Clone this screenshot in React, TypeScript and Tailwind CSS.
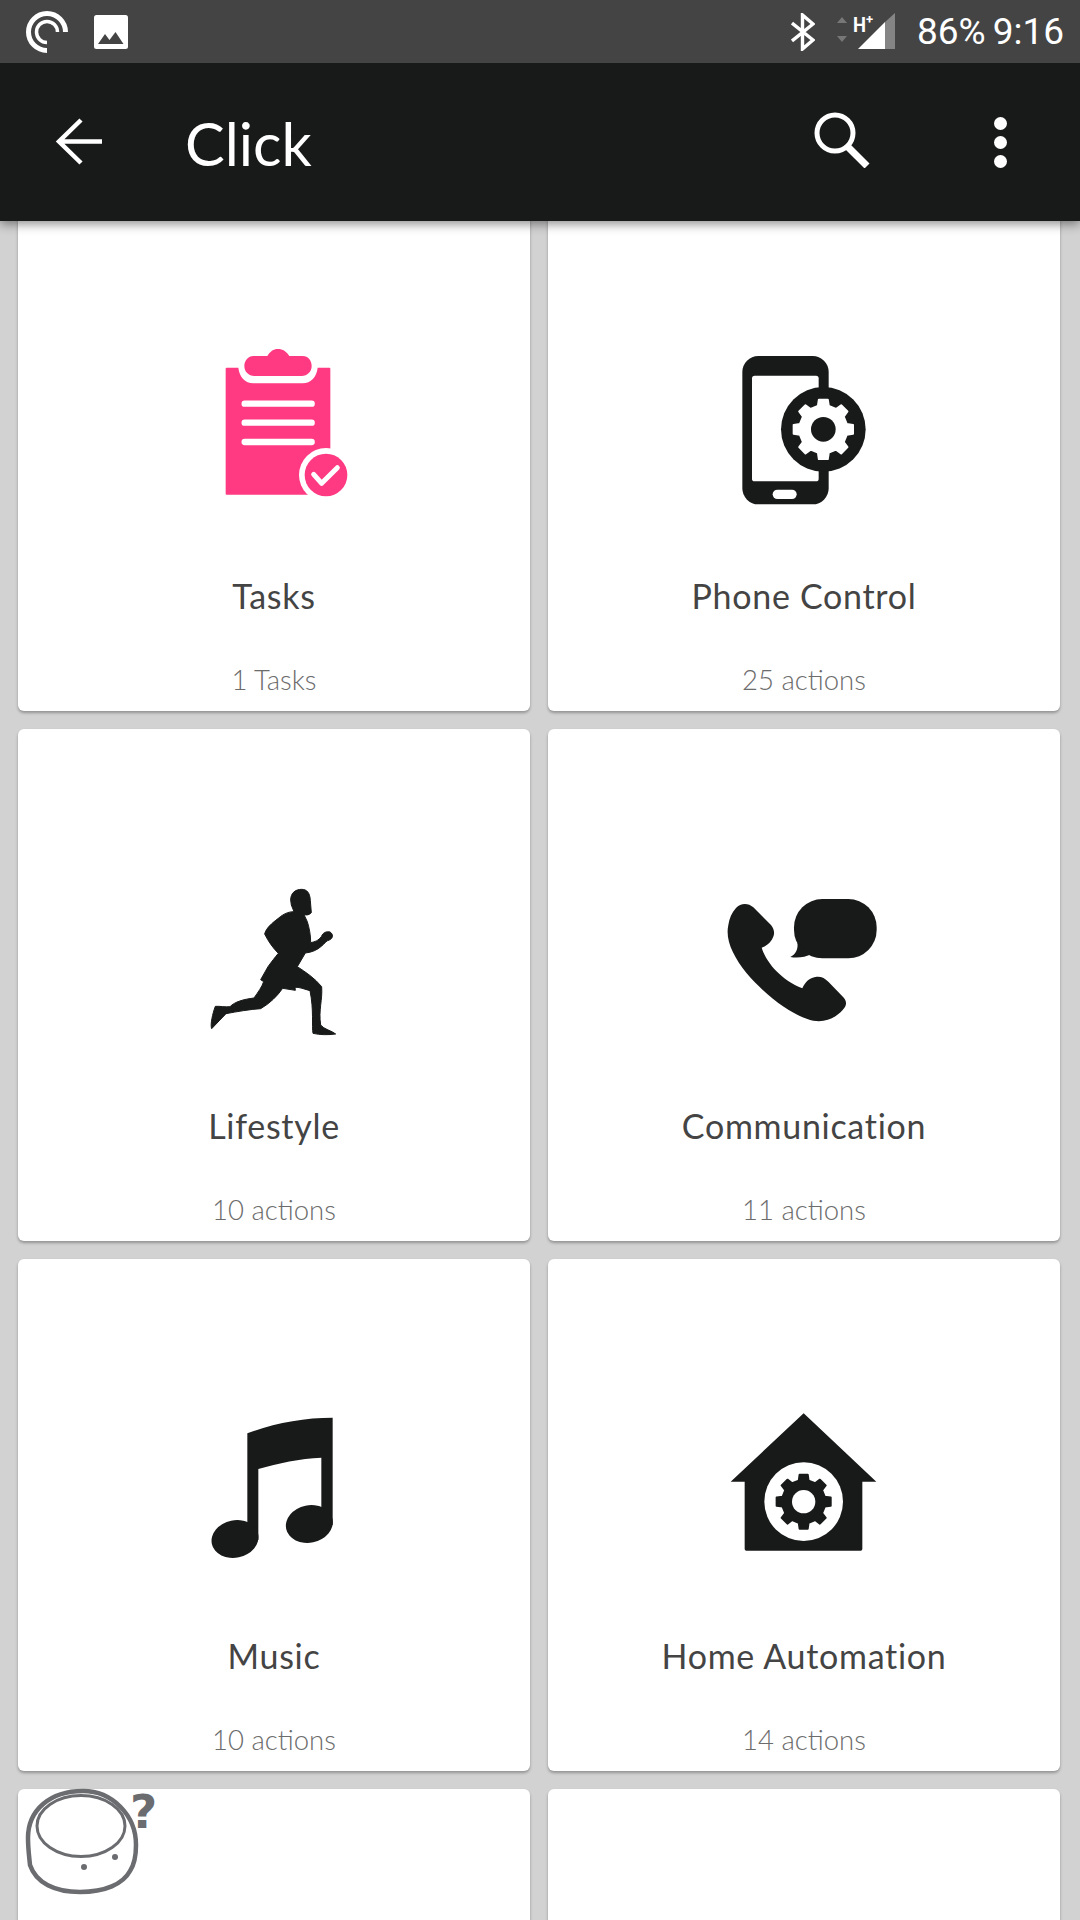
import React from "react";

const DARK = "#181a19";

function gear(cx: number, cy: number, R: number, r: number, teeth = 8) {
  const pts: string[] = [];
  const step = (Math.PI * 2) / teeth;
  const wOuter = step * 0.19;
  const wInner = step * 0.29;
  for (let i = 0; i < teeth; i++) {
    const a = -Math.PI / 2 + i * step;
    const p = (rad: number, ang: number) =>
      `${(cx + rad * Math.cos(ang)).toFixed(1)} ${(cy + rad * Math.sin(ang)).toFixed(1)}`;
    pts.push(p(r, a - wInner), p(R, a - wOuter), p(R, a + wOuter), p(r, a + wInner));
  }
  return "M" + pts.join("L") + "Z";
}

function TasksIcon() {
  return (
    <svg viewBox="-33 -3 570 570" className="w-[190px] h-[190px]">
      <g fill="#ff3a82">
        <path d="M110 113H145C148 140 165 160 190 160H338C363 160 380 140 383 113H418Q421 113 421 116V491Q421 494 418 494H110Q107 494 107 491V116Q107 113 110 113Z" />
        <path d="M190 78H232C240 65 250 57 264 57C278 57 290 65 298 78H338C355 78 365 92 365 108C365 125 352 138 335 138H193C176 138 163 125 163 108C163 92 175 78 190 78Z" />
      </g>
      <g stroke="#fff" strokeWidth="19" strokeLinecap="round">
        <path d="M164 221H365M164 278H365M164 336H365" />
      </g>
      <circle cx="408" cy="435" r="81" fill="#fff" />
      <circle cx="408" cy="435" r="64" fill="#ff3a82" />
      <path d="M371 433L395 460L442 413" fill="none" stroke="#fff" strokeWidth="15" strokeLinecap="round" strokeLinejoin="round" />
    </svg>
  );
}

function PhoneIcon() {
  return (
    <svg viewBox="-3 -33 570 570" className="w-[190px] h-[190px]">
      <rect x="97" y="48" width="259" height="445" rx="48" fill={DARK} />
      <rect x="126" y="107" width="200" height="317" rx="8" fill="#fff" />
      <rect x="188" y="449" width="72" height="28" rx="14" fill="#fff" />
      <circle cx="340" cy="268" r="127" fill={DARK} />
      <path d={gear(340, 268, 90, 72)} fill="#fff" stroke="#fff" strokeWidth="6" strokeLinejoin="round" />
      <circle cx="340" cy="268" r="37" fill={DARK} />
    </svg>
  );
}

function RunnerIcon() {
  return (
    <svg viewBox="-33 -33 570 570" className="w-[190px] h-[190px]">
      <path
        fill={DARK}
        stroke={DARK}
        strokeWidth="3"
        strokeLinejoin="round"
        d="M302 90C302 70 315 58 335 58C352 58 360 70 361 92L364 128C358 135 350 136 342 134L352 155C358 175 362 195 362 218C375 215 385 212 394 200C398 188 410 183 420 186C430 192 430 205 418 210C408 212 405 220 395 228C382 240 365 247 346 249L322 290C345 305 375 325 395 350C398 390 385 420 392 465C402 478 425 482 437 492C415 495 390 495 369 490C365 470 372 420 360 362C345 358 325 350 315 352L316 361L278 355C262 378 240 400 212 416C180 418 140 425 108 431C95 445 80 460 65 476C60 465 68 430 76 409C90 408 105 412 120 410C135 395 160 388 192 384C205 365 215 352 221 335L212 329L234 290C245 275 255 262 265 250C250 235 235 215 224 192C228 175 245 160 265 145C280 132 295 125 312 125L304 105Z"
      />
    </svg>
  );
}

function CallIcon() {
  return (
    <svg viewBox="-3 -63 570 570" className="w-[190px] h-[190px]">
      <g fill={DARK}>
        <path d="M78 84C92 68 115 68 130 82L183 135C195 150 195 165 185 180C177 192 165 200 155 203C170 250 215 300 277 325C285 305 300 292 320 290C335 289 345 295 355 305L400 352C412 365 410 378 398 390C375 415 345 428 310 422C250 410 170 350 110 280C70 230 45 180 55 135C58 115 65 98 78 84Z" />
        <rect x="252" y="57" width="248" height="178" rx="85" />
        <path d="M262 188C265 205 258 222 241 231C262 235 285 232 305 222Z" />
      </g>
    </svg>
  );
}

function MusicIcon() {
  return (
    <svg viewBox="-33 -33 570 570" className="w-[190px] h-[190px]">
      <g fill={DARK}>
        <path d="M172 100C250 70 340 53 428 53V375H394V173C330 175 265 190 205 207V420H172Z" />
        <ellipse cx="358" cy="372" rx="71" ry="56" transform="rotate(-12 358 372)" />
        <ellipse cx="135" cy="417" rx="71" ry="56" transform="rotate(-12 135 417)" />
      </g>
    </svg>
  );
}

function HomeIcon() {
  return (
    <svg viewBox="-3 -33 570 570" className="w-[190px] h-[190px]">
      <path d="M281 40L499 245H457V447Q457 452 452 452H109Q104 452 104 447V245H62Z" fill={DARK} />
      <circle cx="281" cy="305" r="118" fill="#fff" />
      <path d={gear(281, 305, 82, 65)} fill={DARK} stroke={DARK} strokeWidth="6" strokeLinejoin="round" />
      <circle cx="281" cy="305" r="35" fill="#fff" />
    </svg>
  );
}

function Card({ icon, title, sub }: { icon?: React.ReactNode; title?: string; sub?: string }) {
  return (
    <div className="h-[512px] bg-white rounded-[6px] shadow-[0_2px_3px_rgba(0,0,0,0.3)] flex flex-col items-center pt-[130px]">
      {title && (
        <>
          <div className="h-[190px]">{icon}</div>
          <div className="mt-[57px] h-[40px] leading-[40px] text-[34px] tracking-[0.7px] text-[#444444]">{title}</div>
          <div className="mt-[47px] h-[34px] leading-[34px] text-[27.5px] font-light text-[#6c6c6c]">{sub}</div>
        </>
      )}
    </div>
  );
}

function Mascot() {
  return (
    <svg viewBox="0 0 200 180" className="absolute left-0 top-[1740px] w-[200px] h-[180px]">
      <g fill="none" stroke="#6b6c70">
        <path strokeWidth="4.5" d="M28 98C28 70 50 51 83 51C112 51 136 75 136 105C136 118 134 125 130 131C123 144 105 152 80 152C55 152 36 143 30 125C29 115 28 108 28 98Z" />
        <ellipse cx="81" cy="86" rx="44" ry="30.5" strokeWidth="3" />
      </g>
      <circle cx="115" cy="117" r="3" fill="#6b6c70" />
      <circle cx="84" cy="127" r="3" fill="#6b6c70" />
      <text x="130" y="88" fontFamily="'DejaVu Sans', sans-serif" fontWeight="700" fontSize="47" fill="#6b6c70">?</text>
    </svg>
  );
}

export default function App() {
  return (
    <div className="relative w-[1080px] h-[1920px] overflow-hidden bg-[#d2d2d2] font-['Lato',sans-serif]">
      <div className="relative z-10 shadow-[0_3px_10px_rgba(0,0,0,0.45)]">
        <div className="h-[63px] bg-[#444444] flex items-center justify-between pl-[26px] pr-[16px] font-['Roboto',sans-serif]">
          <div className="flex items-center gap-[26px]">
            <svg viewBox="0 0 42 42" className="w-[42px] h-[42px]" fill="none" stroke="#fff" strokeLinecap="butt">
              <path strokeWidth="5" d="M21 39.5A18.5 18.5 0 1 1 39.5 21" />
              <path strokeWidth="3.5" d="M21 31.5A10.5 10.5 0 1 1 31.5 21" />
            </svg>
            <svg viewBox="0 0 34 34" className="w-[34px] h-[34px]">
              <rect width="34" height="34" rx="2.5" fill="#fff" />
              <path d="M4 29L11 19L15.5 25L21.5 17L29.5 29Z" fill="#444444" />
            </svg>
          </div>
          <div className="flex items-center">
            <svg viewBox="0 0 24 38" className="w-[24px] h-[38px]" fill="none" stroke="#fff" strokeWidth="3.4">
              <path d="M1 10L22 27L11.5 36V2L22 11L1 28" />
            </svg>
            <svg viewBox="0 0 60 38" className="ml-[21px] w-[60px] h-[38px]">
              <path d="M1 10L6 4L11 10ZM1 23L11 23L6 29Z" fill="#777777" />
              <text x="17" y="19" fontFamily="'Roboto', sans-serif" fontWeight="700" fontSize="21" fill="#fff" textLength="13" lengthAdjust="spacingAndGlyphs">H</text>
              <text x="30" y="11" fontFamily="'Roboto', sans-serif" fontWeight="700" fontSize="13" fill="#fff">+</text>
              <path d="M22 36L49 9V36Z" fill="#fff" />
              <path d="M49 9L59 0V36H49Z" fill="#858585" />
            </svg>
            <span className="ml-[21px] text-[37px] leading-[38px] text-white">86%</span>
            <span className="ml-[7px] text-[37px] leading-[38px] text-white">9:16</span>
          </div>
        </div>
        <div className="h-[158px] bg-[#181a19] flex items-center pl-[54px] pr-[73px]">
          <svg viewBox="0 0 48 48" className="w-[48px] h-[48px]" fill="none" stroke="#fff" strokeWidth="4.5">
            <path d="M48 23.5H5M27 2L5 23.5L27 45" />
          </svg>
          <div className="ml-[83px] mt-[2px] text-[59.5px] leading-[70px] text-white">Click</div>
          <div className="flex-1" />
          <svg viewBox="0 0 56 56" className="w-[56px] h-[56px] -mt-[4px]" fill="none" stroke="#fff">
            <circle cx="21" cy="21" r="18" strokeWidth="5" />
            <path d="M33 34L53 54" strokeWidth="7" />
          </svg>
          <div className="ml-[124px] flex flex-col gap-[6px]">
            <div className="w-[13px] h-[13px] rounded-full bg-white" />
            <div className="w-[13px] h-[13px] rounded-full bg-white" />
            <div className="w-[13px] h-[13px] rounded-full bg-white" />
          </div>
        </div>
      </div>

      <div className="-mt-[22px] px-[18px] pr-[20px] grid grid-cols-2 gap-[18px]">
        <Card icon={<TasksIcon />} title="Tasks" sub="1 Tasks" />
        <Card icon={<PhoneIcon />} title="Phone Control" sub="25 actions" />
        <Card icon={<RunnerIcon />} title="Lifestyle" sub="10 actions" />
        <Card icon={<CallIcon />} title="Communication" sub="11 actions" />
        <Card icon={<MusicIcon />} title="Music" sub="10 actions" />
        <Card icon={<HomeIcon />} title="Home Automation" sub="14 actions" />
        <Card />
        <Card />
      </div>

      <Mascot />
    </div>
  );
}
